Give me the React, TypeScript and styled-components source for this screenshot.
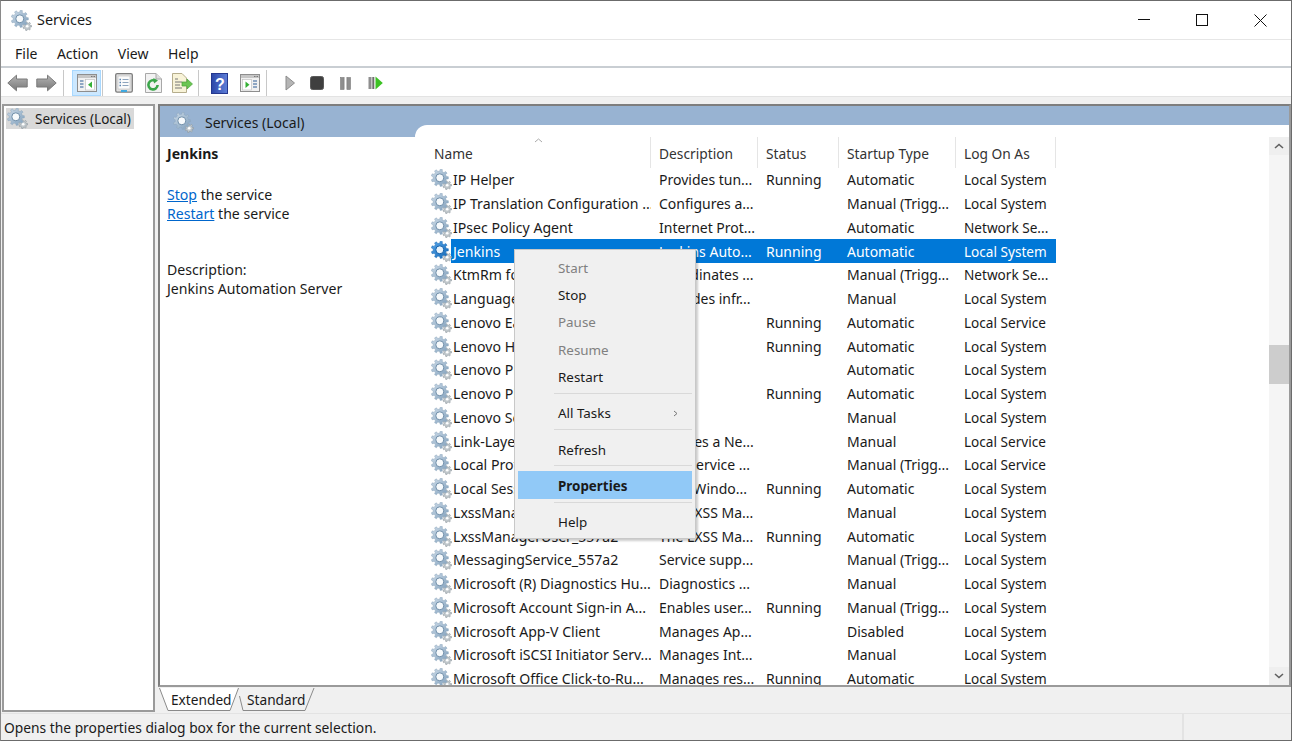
import React from "react";
import styled, { createGlobalStyle } from "styled-components";

const Global = createGlobalStyle`
  html, body { margin: 0; padding: 0; background: #fff; overflow: hidden; }
  body { font-family: "Noto Sans", "Open Sans", sans-serif; font-size: 14px; color: #1a1a1a; }
`;

const Window = styled.div`
  box-sizing: border-box;
  width: 1292px;
  height: 741px;
  border: 1px solid #6b6b6b;
  border-left-color: #8a8a8a;
  display: flex;
  flex-direction: column;
  background: #f0f0f0;
`;
const TitleBar = styled.div`
  height: 38px;
  background: #fff;
  display: flex;
  align-items: center;
  padding: 0 1px 0 10px;
  border-bottom: 1px solid #e6e6e6;
  flex: none;
`;
const TitleText = styled.span`
  font-size: 14.4px;
  flex: 1;
  margin-left: 5px;
  margin-top: -1px;
`;
const WinButton = styled.div`
  width: 58.5px;
  height: 38px;
  display: flex;
  align-items: center;
  justify-content: center;
`;
const MenuBar = styled.div`
  height: 26px;
  background: #fff;
  display: flex;
  align-items: center;
  padding-left: 14px;
  gap: 19.5px;
  flex: none;
  border-bottom: 2px solid #c9ced3;
`;
const MenuItem = styled.span`
  font-size: 14px;
`;
const ToolBar = styled.div`
  height: 29px;
  background: #fff;
  display: flex;
  align-items: center;
  flex: none;
  padding: 2px 0 0 6px;
  box-sizing: border-box;
  border-bottom: 1px solid #e3e3e3;
`;
const ToolSep = styled.div<{ $ml: number }>`
  width: 1px;
  height: 26px;
  background: #c8c8c8;
  margin-left: ${(p) => p.$ml}px;
`;
const ToolIcon = styled.div<{ $ml: number; $active?: boolean }>`
  display: flex;
  align-items: center;
  justify-content: center;
  margin-left: ${(p) => p.$ml}px;
  ${(p) =>
    p.$active
      ? `width: 29px; height: 26px; background:#cce8ff; border:1px solid #a8d8ff; box-sizing:border-box;`
      : ""}
`;
const Main = styled.div`
  flex: 1;
  min-height: 0;
  display: flex;
  padding: 7px 0 0 1px;
  gap: 3px;
`;
const TreePane = styled.div`
  box-sizing: border-box;
  width: 153px;
  height: 608px;
  background: #fff;
  border: 2px solid #9a9a9a;
  padding: 2px;
  flex: none;
`;
const TreeNode = styled.div`
  display: flex;
  align-items: center;
  height: 21px;
  width: 128px;
  background: #d9d9d9;
  gap: 7px;
  padding-left: 1px;
  box-sizing: border-box;
  font-size: 13.5px;
  white-space: nowrap;
`;
const RightColumn = styled.div`
  flex: 1;
  min-width: 0;
  display: flex;
  flex-direction: column;
`;
const SnapPane = styled.div`
  box-sizing: border-box;
  height: 583px;
  border: 2px solid #7e7e7e;
  border-right-color: #9a9a9a;
  border-bottom-color: #9a9a9a;
  background: #fff;
  display: flex;
  flex-direction: column;
  overflow: hidden;
`;
const BlueBand = styled.div`
  height: 31px;
  background: #98b3d2;
  display: flex;
  align-items: flex-start;
  flex: none;
`;
const BandTitle = styled.div`
  width: 255px;
  height: 31px;
  display: flex;
  align-items: center;
  gap: 11px;
  padding: 1px 0 0 13px;
  box-sizing: border-box;
  font-size: 14px;
  flex: none;
`;
const BandCurve = styled.div`
  flex: 1;
  height: 12px;
  margin-top: 19px;
  background: #fff;
  border-top-left-radius: 13px;
`;
const Body = styled.div`
  flex: 1;
  min-height: 0;
  display: flex;
`;
const InfoPane = styled.div`
  width: 266px;
  flex: none;
  padding: 7px 0 0 7px;
  box-sizing: border-box;
  font-size: 14.1px;
  line-height: 19px;
`;
const InfoTitle = styled.div`
  font-weight: 700;
  margin-bottom: 22px;
`;
const InfoLine = styled.div<{ $gap?: number }>`
  margin-top: ${(p) => p.$gap ?? 0}px;
`;
const InfoLink = styled.a`
  color: #0066cc;
  text-decoration: underline;
`;
const ListWrap = styled.div`
  flex: 1;
  min-width: 0;
  position: relative;
  display: flex;
`;
const ListScroll = styled.div`
  flex: 1;
  min-width: 0;
  overflow: hidden;
`;
const columns = "225px 107px 81px 117px 100px";
const HeaderRow = styled.div`
  display: grid;
  grid-template-columns: ${columns};
  height: 31px;
`;
const HeaderCell = styled.div`
  position: relative;
  padding: 4px 0 0 8px;
  font-size: 13.75px;
  line-height: 26px;
  border-right: 1px solid #e5e5e5;
  color: #333;
`;
const SortCaret = styled.svg`
  position: absolute;
  left: 108px;
  top: 1px;
`;
const Row = styled.div<{ $selected?: boolean }>`
  display: grid;
  grid-template-columns: ${columns};
  height: 23.75px;
  align-items: center;
  font-size: 14px;
  position: relative;
  color: ${(p) => (p.$selected ? "#fff" : "#1a1a1a")};
  white-space: nowrap;
`;
const RowHighlight = styled.div`
  position: absolute;
  left: 25px;
  top: 0;
  bottom: 0;
  width: 605px;
  background: #0078d7;
`;
const Cell = styled.div`
  padding-left: 8px;
  position: relative;
  overflow: hidden;
`;
const LogonCell = styled(Cell)`
  font-size: 13.6px;
`;
const NameCell = styled.div`
  display: flex;
  align-items: center;
  position: relative;
  padding-left: 5px;
  gap: 1px;
  overflow: hidden;
  font-size: 14.1px;
`;
const ScrollBar = styled.div`
  width: 20px;
  background: #f5f5f5;
  flex: none;
  display: flex;
  flex-direction: column;
  align-items: stretch;
`;
const ScrollBtn = styled.div`
  height: 18px;
  display: flex;
  align-items: center;
  justify-content: center;
  background: #efefef;
`;
const ScrollTrack = styled.div`
  flex: 1;
  padding-top: 190px;
`;
const ScrollThumb = styled.div`
  height: 39px;
  background: #cdcdcd;
`;
const ContextMenu = styled.div`
  position: absolute;
  left: 88px;
  top: 112px;
  width: 182px;
  height: 290px;
  background: #f0f0f0;
  border: 1px solid #c8c8c8;
  box-sizing: border-box;
  box-shadow: 2px 2px 2px rgba(0, 0, 0, 0.2);
  padding: 4px 3px 0 3px;
  font-size: 13.4px;
  color: #1a1a1a;
`;
const MenuRow = styled.div<{ $disabled?: boolean; $hot?: boolean; $h: number }>`
  height: ${(p) => p.$h}px;
  box-sizing: border-box;
  display: flex;
  align-items: center;
  justify-content: space-between;
  padding: ${(p) => (p.$hot ? 2 : 0)}px 14px 0 40px;
  color: ${(p) => (p.$disabled ? "#808080" : "#1a1a1a")};
  background: ${(p) => (p.$hot ? "#91c9f7" : "transparent")};
  font-weight: ${(p) => (p.$hot ? 700 : 400)};
`;
const MenuSep = styled.div<{ $mt: number; $mb: number }>`
  height: 1px;
  background: #d9d9d9;
  margin: ${(p) => p.$mt}px 0 ${(p) => p.$mb}px 36px;
`;
const TabStrip = styled.div`
  display: flex;
  height: 24px;
  padding-left: 1px;
  align-items: flex-start;
  flex: none;
  margin-top: 1px;
`;
const Tab = styled.div<{ $w: number; $ml?: number }>`
  position: relative;
  width: ${(p) => p.$w}px;
  height: 24px;
  margin-left: ${(p) => p.$ml ?? 0}px;
  flex: none;
`;
const TabShape = styled.svg`
  position: absolute;
  inset: 0;
`;
const TabLabel = styled.span<{ $pl: number }>`
  position: absolute;
  left: ${(p) => p.$pl}px;
  top: 0;
  line-height: 23px;
  font-size: 13.7px;
`;
const StatusBar = styled.div`
  height: 27px;
  flex: none;
  display: flex;
  border-top: 1px solid #e3e3e3;
  font-size: 13.8px;
  align-items: center;
  box-sizing: border-box;
`;
const StatusText = styled.div`
  flex: 1;
  padding-left: 3px;
`;
const StatusPanel = styled.div`
  width: 107px;
  height: 100%;
  border-left: 2px solid #e3e3e3;
`;

function gearPath(cx: number, cy: number, ro: number, ri: number, n: number) {
  const pts: string[] = [];
  for (let i = 0; i < n; i++) {
    const a = (i / n) * Math.PI * 2;
    const w = (Math.PI * 2) / n;
    const seq: [number, number][] = [
      [ri, a - w * 0.5],
      [ri, a - w * 0.28],
      [ro, a - w * 0.18],
      [ro, a + w * 0.18],
      [ri, a + w * 0.28],
    ];
    seq.forEach(([r, t]) =>
      pts.push(`${(cx + r * Math.cos(t)).toFixed(2)} ${(cy + r * Math.sin(t)).toFixed(2)}`)
    );
  }
  return "M" + pts.join("L") + "Z";
}

const bigGear = gearPath(8.8, 8.8, 8.6, 6.6, 9);
const smallGear = gearPath(16.2, 16.2, 4.4, 3.1, 7);

function Gear({ selected, uid, size = 21 }: { selected?: boolean; uid: string; size?: number }) {
  const id = `g-${uid}`;
  return (
    <svg width={size} height={size} viewBox="0 0 21 21" style={{ flex: "none" }}>
      <defs>
        <linearGradient id={id} x1="0" y1="0" x2="1" y2="1">
          <stop offset="0" stopColor={selected ? "#58a5e8" : "#cddbe8"} />
          <stop offset="1" stopColor={selected ? "#1268b8" : "#7f9fbc"} />
        </linearGradient>
      </defs>
      <path d={smallGear} fill="#c3cace" stroke="#8d979e" strokeWidth="0.6" />
      <circle cx="16.2" cy="16.2" r="1.3" fill="#fff" />
      <path d={bigGear} fill={`url(#${id})`} stroke={selected ? "#1a6bb5" : "#8aa4bb"} strokeWidth="0.5" />
      <circle cx="8.8" cy="8.8" r="4" fill={selected ? "#e8f3fc" : "#f7fafc"} stroke={selected ? "#0f5ea8" : "#6f8ea9"} strokeWidth="1" />
    </svg>
  );
}

function ArrowIcon({ flip, uid }: { flip?: boolean; uid: string }) {
  const id = `arrow-${uid}`;
  return (
    <svg width="21" height="18" viewBox="0 0 21 18" style={flip ? { transform: "scaleX(-1)" } : undefined}>
      <defs>
        <linearGradient id={id} x1="0" y1="0" x2="0" y2="1">
          <stop offset="0" stopColor="#b4b4b4" />
          <stop offset="1" stopColor="#777" />
        </linearGradient>
      </defs>
      <path d="M0.8 9 L9.5 1.2 V5 H20.2 V13 H9.5 V16.8 Z" fill={`url(#${id})`} stroke="#7b7b7b" strokeWidth="1" strokeLinejoin="round" />
    </svg>
  );
}
function PaneIcon({ right }: { right?: boolean }) {
  return (
    <svg width="20" height="18" viewBox="0 0 20 18">
      <rect x="0.5" y="0.5" width="19" height="17" fill="#f1f1f1" stroke="#8e8e8e" />
      <rect x="1" y="1" width="18" height="3" fill="#c6c6c6" />
      <rect x="14" y="2" width="1.5" height="1" fill="#777" />
      <rect x="16.5" y="2" width="1.5" height="1" fill="#777" />
      {right ? (
        <>
          <rect x="2.5" y="5.5" width="9" height="10.5" fill="#fff" stroke="#bbb" strokeWidth="0.6" />
          <path d="M5.5 7.5 L9.5 10.7 L5.5 14 Z" fill="#35b035" />
          <path d="M13 7h4M13 10h4M13 13h4" stroke="#6f8fb5" strokeWidth="1.5" />
        </>
      ) : (
        <>
          <path d="M3 7h3.5M3 10h3.5M3 13h3.5" stroke="#6f8fb5" strokeWidth="1.5" />
          <rect x="8.5" y="5.5" width="9" height="10.5" fill="#fff" stroke="#bbb" strokeWidth="0.6" />
          <path d="M15 7.5 L11 10.7 L15 14 Z" fill="#35b035" />
        </>
      )}
    </svg>
  );
}
function PropsIcon() {
  return (
    <svg width="18" height="20" viewBox="0 0 18 20">
      <rect x="0.7" y="0.7" width="16.6" height="18.4" rx="1.4" fill="#e2e2e2" stroke="#7d7d7d" strokeWidth="1.3" />
      <rect x="3" y="3" width="12" height="13" fill="#fbfbfb" stroke="#bcbcbc" strokeWidth="0.6" />
      <path d="M4.5 6.5h1.5M4.5 9.5h1.5M4.5 12.5h1.5" stroke="#5b84b1" strokeWidth="1.3" />
      <path d="M7.5 6.5h6M7.5 9.5h6M7.5 12.5h6" stroke="#8da4bd" strokeWidth="1" />
      <rect x="6" y="17" width="6" height="2" fill="#3fa9e0" />
    </svg>
  );
}
function RefreshIcon() {
  return (
    <svg width="17" height="20" viewBox="0 0 17 20">
      <path d="M0.5 0.5 H11 L16.5 6 V19.5 H0.5 Z" fill="#f2f2f2" stroke="#a8a8a8" />
      <path d="M11 0.5 V6 H16.5" fill="#dedede" stroke="#a8a8a8" />
      <path d="M12.6 12 A4.6 4.6 0 1 1 10.6 8" fill="none" stroke="#3ba64a" strokeWidth="2.6" />
      <path d="M8.3 5 L13 7.6 L9 10.6 Z" fill="#3ba64a" />
    </svg>
  );
}
function ExportIcon() {
  return (
    <svg width="21" height="20" viewBox="0 0 21 20">
      <path d="M0.5 0.5 H10 L14.5 5 V19.5 H0.5 Z" fill="#f8f3d8" stroke="#b5ad8c" />
      <path d="M3 6h3M3 9h7M3 12h5M3 15h7" stroke="#777" strokeWidth="1" />
      <path d="M10 9 H15 V6 L20.5 11 L15 16 V13 H10 Z" fill="#6bc552" stroke="#4aa33a" strokeWidth="0.7" />
    </svg>
  );
}
function HelpIcon() {
  return (
    <svg width="17" height="21" viewBox="0 0 17 21">
      <defs>
        <linearGradient id="help-fill" x1="0" y1="0" x2="1" y2="0">
          <stop offset="0" stopColor="#2b47a8" />
          <stop offset="1" stopColor="#5f7fd8" />
        </linearGradient>
      </defs>
      <rect x="0.5" y="0.5" width="16" height="20" fill="url(#help-fill)" stroke="#25388f" />
      <text x="9" y="16.5" fontFamily="'Liberation Sans', sans-serif" fontWeight="700" fontSize="16" fill="#fff" textAnchor="middle">?</text>
    </svg>
  );
}
function PlayIcon() {
  return (
    <svg width="10" height="16" viewBox="0 0 10 16">
      <path d="M1 1 L9.5 8 L1 15 Z" fill="#b5b5b5" stroke="#8c8c8c" strokeWidth="1" strokeLinejoin="round" />
    </svg>
  );
}
function StopIcon() {
  return (
    <svg width="14" height="14" viewBox="0 0 14 14">
      <rect x="0.5" y="0.5" width="13" height="13" rx="2" fill="#3f3f3f" stroke="#5a5a5a" />
    </svg>
  );
}
function PauseIcon() {
  return (
    <svg width="11" height="13" viewBox="0 0 11 13">
      <rect x="0.5" y="0.5" width="3.6" height="12" fill="#8e8e8e" stroke="#7a7a7a" strokeWidth="0.6" />
      <rect x="6.9" y="0.5" width="3.6" height="12" fill="#8e8e8e" stroke="#7a7a7a" strokeWidth="0.6" />
    </svg>
  );
}
function ResumeIcon() {
  return (
    <svg width="15" height="14" viewBox="0 0 15 14">
      <rect x="0.5" y="1" width="3" height="12" fill="#8e8e8e" />
      <rect x="4.3" y="1" width="2" height="12" fill="#6e6e6e" />
      <path d="M7.5 0.5 L14.8 7 L7.5 13.5 Z" fill="#3cc224" />
    </svg>
  );
}

type Svc = [string, string, string, string, string];
const services: Svc[] = [
  ["IP Helper", "Provides tun...", "Running", "Automatic", "Local System"],
  ["IP Translation Configuration ...", "Configures a...", "", "Manual (Trigg...", "Local System"],
  ["IPsec Policy Agent", "Internet Prot...", "", "Automatic", "Network Se..."],
  ["Jenkins", "Jenkins Auto...", "Running", "Automatic", "Local System"],
  ["KtmRm for Distributed Tran...", "Coordinates ...", "", "Manual (Trigg...", "Network Se..."],
  ["Language Experience Service", "Provides infr...", "", "Manual", "Local System"],
  ["Lenovo EasyResume Service", "", "Running", "Automatic", "Local Service"],
  ["Lenovo Hotkey Client Loader", "", "Running", "Automatic", "Local System"],
  ["Lenovo PM Service", "", "", "Automatic", "Local System"],
  ["Lenovo Platform Service", "", "Running", "Automatic", "Local System"],
  ["Lenovo Security Service", "", "", "Manual", "Local System"],
  ["Link-Layer Topology Discov...", "Creates a Ne...", "", "Manual", "Local Service"],
  ["Local Profile Assistant Service", "This service ...", "", "Manual (Trigg...", "Local Service"],
  ["Local Session Manager", "Core Windo...", "Running", "Automatic", "Local System"],
  ["LxssManager", "The LXSS Ma...", "", "Manual", "Local System"],
  ["LxssManagerUser_557a2", "The LXSS Ma...", "Running", "Automatic", "Local System"],
  ["MessagingService_557a2", "Service supp...", "", "Manual (Trigg...", "Local System"],
  ["Microsoft (R) Diagnostics Hu...", "Diagnostics ...", "", "Manual", "Local System"],
  ["Microsoft Account Sign-in A...", "Enables user...", "Running", "Manual (Trigg...", "Local System"],
  ["Microsoft App-V Client", "Manages Ap...", "", "Disabled", "Local System"],
  ["Microsoft iSCSI Initiator Serv...", "Manages Int...", "", "Manual", "Local System"],
  ["Microsoft Office Click-to-Ru...", "Manages res...", "Running", "Automatic", "Local System"],
];

export default function App() {
  return (
    <>
      <Global />
      <Window>
        <TitleBar>
          <Gear uid="title" size={21} />
          <TitleText>Services</TitleText>
          <WinButton>
            <svg width="12" height="2" viewBox="0 0 12 2"><path d="M0 0.5H12" stroke="#111" /></svg>
          </WinButton>
          <WinButton>
            <svg width="12" height="12" viewBox="0 0 12 12"><rect x="0.5" y="0.5" width="11" height="11" fill="none" stroke="#111" /></svg>
          </WinButton>
          <WinButton>
            <svg width="13" height="13" viewBox="0 0 13 13"><path d="M0.5 0.5L12.5 12.5M12.5 0.5L0.5 12.5" stroke="#111" /></svg>
          </WinButton>
        </TitleBar>
        <MenuBar>
          <MenuItem>File</MenuItem>
          <MenuItem>Action</MenuItem>
          <MenuItem>View</MenuItem>
          <MenuItem>Help</MenuItem>
        </MenuBar>
        <ToolBar>
          <ToolIcon $ml={0}><ArrowIcon uid="back" /></ToolIcon>
          <ToolIcon $ml={8}><ArrowIcon uid="fwd" flip /></ToolIcon>
          <ToolSep $ml={6} />
          <ToolIcon $ml={8} $active><PaneIcon /></ToolIcon>
          <ToolSep $ml={1} />
          <ToolIcon $ml={12}><PropsIcon /></ToolIcon>
          <ToolIcon $ml={12}><RefreshIcon /></ToolIcon>
          <ToolIcon $ml={10}><ExportIcon /></ToolIcon>
          <ToolSep $ml={5} />
          <ToolIcon $ml={12}><HelpIcon /></ToolIcon>
          <ToolIcon $ml={12}><PaneIcon right /></ToolIcon>
          <ToolSep $ml={6} />
          <ToolIcon $ml={18}><PlayIcon /></ToolIcon>
          <ToolIcon $ml={15}><StopIcon /></ToolIcon>
          <ToolIcon $ml={16}><PauseIcon /></ToolIcon>
          <ToolIcon $ml={17}><ResumeIcon /></ToolIcon>
        </ToolBar>
        <Main>
          <TreePane>
            <TreeNode>
              <Gear uid="tree" size={21} />
              Services (Local)
            </TreeNode>
          </TreePane>
          <RightColumn>
            <SnapPane>
              <BlueBand>
                <BandTitle>
                  <Gear uid="band" size={21} />
                  Services (Local)
                </BandTitle>
                <BandCurve />
              </BlueBand>
              <Body>
                <InfoPane>
                  <InfoTitle>Jenkins</InfoTitle>
                  <InfoLine><InfoLink>Stop</InfoLink> the service</InfoLine>
                  <InfoLine><InfoLink>Restart</InfoLink> the service</InfoLine>
                  <InfoLine $gap={37}>Description:</InfoLine>
                  <InfoLine>Jenkins Automation Server</InfoLine>
                </InfoPane>
                <ListWrap>
                  <ListScroll>
                    <HeaderRow>
                      <HeaderCell>
                        Name
                        <SortCaret width="9" height="5" viewBox="0 0 9 5">
                          <path d="M1 4L4.5 1L8 4" fill="none" stroke="#aaa" />
                        </SortCaret>
                      </HeaderCell>
                      <HeaderCell>Description</HeaderCell>
                      <HeaderCell>Status</HeaderCell>
                      <HeaderCell>Startup Type</HeaderCell>
                      <HeaderCell>Log On As</HeaderCell>
                    </HeaderRow>
                    {services.map((s, i) => {
                      const selected = s[0] === "Jenkins";
                      return (
                        <Row key={s[0]} $selected={selected}>
                          {selected && <RowHighlight />}
                          <NameCell>
                            <Gear uid={`r${i}`} selected={selected} />
                            <span>{s[0]}</span>
                          </NameCell>
                          <Cell>{s[1]}</Cell>
                          <Cell>{s[2]}</Cell>
                          <Cell>{s[3]}</Cell>
                          <LogonCell>{s[4]}</LogonCell>
                        </Row>
                      );
                    })}
                  </ListScroll>
                  <ScrollBar>
                    <ScrollBtn>
                      <svg width="10" height="6" viewBox="0 0 10 6"><path d="M1 5L5 1.5L9 5" fill="none" stroke="#606060" strokeWidth="1.6" /></svg>
                    </ScrollBtn>
                    <ScrollTrack><ScrollThumb /></ScrollTrack>
                    <ScrollBtn>
                      <svg width="10" height="6" viewBox="0 0 10 6"><path d="M1 1L5 4.5L9 1" fill="none" stroke="#606060" strokeWidth="1.6" /></svg>
                    </ScrollBtn>
                  </ScrollBar>
                  <ContextMenu>
                    <MenuRow $h={27} $disabled>Start</MenuRow>
                    <MenuRow $h={27.5}>Stop</MenuRow>
                    <MenuRow $h={27.5} $disabled>Pause</MenuRow>
                    <MenuRow $h={27.5} $disabled>Resume</MenuRow>
                    <MenuRow $h={27.5}>Restart</MenuRow>
                    <MenuSep $mt={2} $mb={3} />
                    <MenuRow $h={32}>
                      All Tasks
                      <svg width="5" height="7" viewBox="0 0 5 7"><path d="M1 1L4 3.5L1 6" fill="none" stroke="#777" /></svg>
                    </MenuRow>
                    <MenuSep $mt={0} $mb={4} />
                    <MenuRow $h={31}>Refresh</MenuRow>
                    <MenuSep $mt={0} $mb={5} />
                    <MenuRow $h={28} $hot>Properties</MenuRow>
                    <MenuSep $mt={3} $mb={3} />
                    <MenuRow $h={32}>Help</MenuRow>
                  </ContextMenu>
                </ListWrap>
              </Body>
            </SnapPane>
            <TabStrip>
              <Tab $w={80}>
                <TabShape width="80" height="24" viewBox="0 0 80 24">
                  <path d="M0.5 0 L9 22.5 H71 L79.5 0" fill="#fff" stroke="#8a8a8a" />
                </TabShape>
                <TabLabel $pl={12}>Extended</TabLabel>
              </Tab>
              <Tab $w={82} $ml={-5}>
                <TabShape width="82" height="24" viewBox="0 0 82 24">
                  <path d="M5.5 8 L9 22.5 H71 L80 0" fill="none" stroke="#8a8a8a" />
                </TabShape>
                <TabLabel $pl={13}>Standard</TabLabel>
              </Tab>
            </TabStrip>
          </RightColumn>
        </Main>
        <StatusBar>
          <StatusText>Opens the properties dialog box for the current selection.</StatusText>
          <StatusPanel />
        </StatusBar>
      </Window>
    </>
  );
}
